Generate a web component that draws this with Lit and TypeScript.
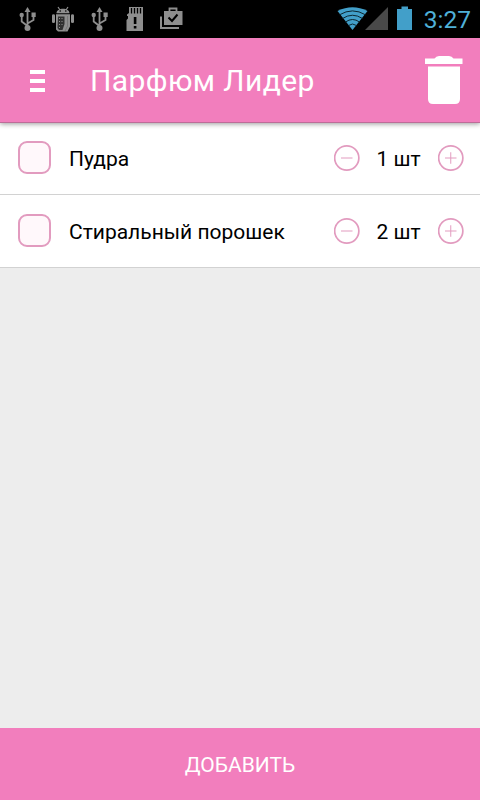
import { LitElement, html, css, svg } from "lit";
import { customElement, property, state } from "lit/decorators.js";

interface Item {
  name: string;
  count: number;
}

const usb = html`<svg class="usb" width="18" height="26" viewBox="0 0 18 26">
  <g fill="none" stroke="#8e8e8e" stroke-width="1.8">
    <path d="M8.500 4V22M8.500 20L2.700 15.500V10M8.500 17.500L14.500 14V9" />
  </g>
  <g fill="#8e8e8e">
    <path d="M8.500 1L11.500 6H5.500Z" />
    <circle cx="8.500" cy="22" r="3" />
    <circle cx="2.700" cy="9" r="2.200" />
    <rect x="12.500" y="6.500" width="4.200" height="4.500" />
  </g>
</svg>`;

@customElement("status-bar")
export class StatusBar extends LitElement {
  static styles = css`
    :host {
      display: flex;
      justify-content: space-between;
      height: 38px;
      background: #000;
      box-sizing: border-box;
      padding: 6px 9px 0 19px;
    }
    .group {
      display: flex;
      align-items: flex-start;
    }
    svg {
      display: block;
    }
    .android {
      margin: 0 16px 0 14px;
    }
    .sd {
      margin-left: 17px;
    }
    .bag {
      margin-left: 15px;
    }
    .battery {
      margin-left: 8px;
    }
    .time {
      margin-left: 11px;
      font: 24.5px/28px Roboto, sans-serif;
      color: #4fb0d8;
    }
  `;

  render() {
    return html`
      <div class="group">
        ${usb}
        <svg class="android" width="24" height="26" viewBox="0 0 24 26">
          <path d="M7 1L9 4M17 1L15 4" stroke="#8e8e8e" stroke-width="1.2" />
          <path fill="#8e8e8e" d="M5.500 7.200C5.500 1.200 18.500 1.200 18.500 7.200ZM5 8.200H19V20.500L16.500 25.500H7L5 23.500ZM1 9.500Q1 8.200 2.500 8.200T4 9.500V16Q4 17 2.500 17T1 16ZM20 9.500Q20 8.200 21.500 8.200T23 9.500V16Q23 17 21.500 17T20 16Z" />
          <circle cx="9.200" cy="5" r=".8" /><circle cx="14.800" cy="5" r=".8" />
          <path fill="#303030" d="M7 10.500H13.500V18L11.500 24H8L6.500 22Z" />
          <path d="M8.500 12v10M11 12v9" stroke="#8e8e8e" stroke-width="1" stroke-dasharray="1 2" />
          <path d="M16.500 10V20L14 25" fill="none" stroke="#777" />
        </svg>
        ${usb}
        <svg class="sd" width="18" height="26" viewBox="0 0 18 26">
          <path fill="#8e8e8e" d="M3 1H17V25H0.500V14L2 12.500V10H1V8.500L3 7V1Z" />
          <path d="M5.500 2v5.500M8.500 2v5.500M11.500 2v5.500M14.500 2v5.500" stroke="#000" stroke-width="1.3" />
          <path d="M7.800 11h2.600v7H7.800zM7.800 20h2.600v2.500H7.800z" />
        </svg>
        <svg class="bag" width="24" height="26" viewBox="0 0 24 26">
          <path d="M2 10.500V22H20" fill="none" stroke="#8e8e8e" stroke-width="2" />
          <path d="M10.500 6V2.500H17.500V6" fill="none" stroke="#8e8e8e" stroke-width="1.8" />
          <path fill="#8e8e8e" d="M5 5H23.500V19H5Z" />
          <path d="M9.500 11.500L13 15L18.500 8.500" fill="none" stroke="#000" stroke-width="2" />
        </svg>
      </div>
      <div class="group">
        <svg width="52" height="26" viewBox="0 0 52 26">
          <path fill="#429fc9" d="M0.500 5Q15.500 -2.500 30.500 5L15.500 24Z" />
          <g fill="none" stroke="#0b2630" stroke-width="1">
            <path d="M2.500 8.800Q15.500 1 28.500 8.800M5.500 12.500Q15.500 6 25.500 12.500M8.500 16Q15.500 11 22.500 16M11.500 19.500Q15.500 16.500 19.500 19.500" />
          </g>
          <path fill="#494949" d="M51 1V24H28Z" />
        </svg>
        <svg class="battery" width="16" height="26" viewBox="0 0 16 26">
          <path fill="#429fc9" d="M4.500 0.500H11V3H15V24H0V3H4.500Z" />
        </svg>
        <span class="time">3:27</span>
      </div>
    `;
  }
}

@customElement("item-row")
export class ItemRow extends LitElement {
  @property() name = "";
  @property({ type: Number }) count = 1;

  static styles = css`
    :host {
      display: flex;
      align-items: center;
      height: 73px;
      box-sizing: border-box;
      padding: 0 16.5px 2px 18px;
      background: #fff;
      border-bottom: 1px solid #d2d2d2;
      color: #000;
      font: 21px/26px Roboto, sans-serif;
    }
    .box {
      width: 33px;
      height: 33px;
      box-sizing: border-box;
      border: 2px solid #e29bbf;
      border-radius: 9px;
      background: #fff8fb;
    }
    .name {
      flex: 1;
      margin-left: 18px;
      padding-top: 3px;
    }
    .count {
      width: 78px;
      text-align: center;
      padding-top: 3px;
    }
    svg {
      display: block;
      fill: none;
      stroke: #e29bbf;
    }
  `;

  private circle(plus: boolean) {
    return html`<svg width="26" height="27" viewBox="0 0 26 27">
      <circle cx="12.750" cy="14" r="12.100" stroke-width="1.700" />
      <path d="M7 14H18.500" />
      ${plus ? svg`<path d="M12.750 8.250V19.750" />` : null}
    </svg>`;
  }

  render() {
    return html`
      <div class="box"></div>
      <div class="name">${this.name}</div>
      ${this.circle(false)}
      <div class="count">${this.count} шт</div>
      ${this.circle(true)}
    `;
  }
}

@customElement("app-root")
export class AppRoot extends LitElement {
  @state() private items: Item[] = [
    { name: "Пудра", count: 1 },
    { name: "Стиральный порошек", count: 2 },
  ];

  static styles = css`
    :host {
      display: flex;
      flex-direction: column;
      height: 800px;
      background: #ededed;
      font-family: Roboto, sans-serif;
    }
    .header {
      display: flex;
      align-items: center;
      height: 85px;
      margin-bottom: -1px;
      box-sizing: border-box;
      padding: 0 17px 1px 30px;
      background: #f27ebd;
      border-bottom: 1px solid #bd6c98;
      box-shadow: 0 1px 5px rgba(0, 0, 0, 0.4);
      position: relative;
      color: #fff;
    }
    .menu {
      display: flex;
      flex-direction: column;
      gap: 5px;
      width: 15px;
      margin-top: 3px;
    }
    .bar {
      height: 4px;
      background: #fff;
    }
    .title {
      flex: 1;
      margin-left: 45px;
      font-size: 30px;
      line-height: 36px;
      letter-spacing: 0.4px;
      padding-top: 3px;
    }
    .list {
      flex: 1;
    }
    .add {
      height: 72px;
      background: #f27ebd;
      color: #fff;
      text-align: center;
      font-size: 21px;
      line-height: 74px;
    }
  `;

  render() {
    return html`
      <status-bar></status-bar>
      <div class="header">
        <div class="menu">
          <div class="bar"></div>
          <div class="bar"></div>
          <div class="bar"></div>
        </div>
        <div class="title">Парфюм Лидер</div>
        <svg width="38" height="48" viewBox="0 0 38 48" fill="#fff">
          <path d="M0 2.500H9.500Q11 0 14 0H24Q27 0 28.500 2.500H37.500V8H0Z" />
          <path d="M3 10.500H35V43Q35 48 30 48H8Q3 48 3 43Z" />
        </svg>
      </div>
      <div class="list">
        ${this.items.map((i) => html`<item-row .name=${i.name} .count=${i.count}></item-row>`)}
      </div>
      <div class="add">ДОБАВИТЬ</div>
    `;
  }
}
